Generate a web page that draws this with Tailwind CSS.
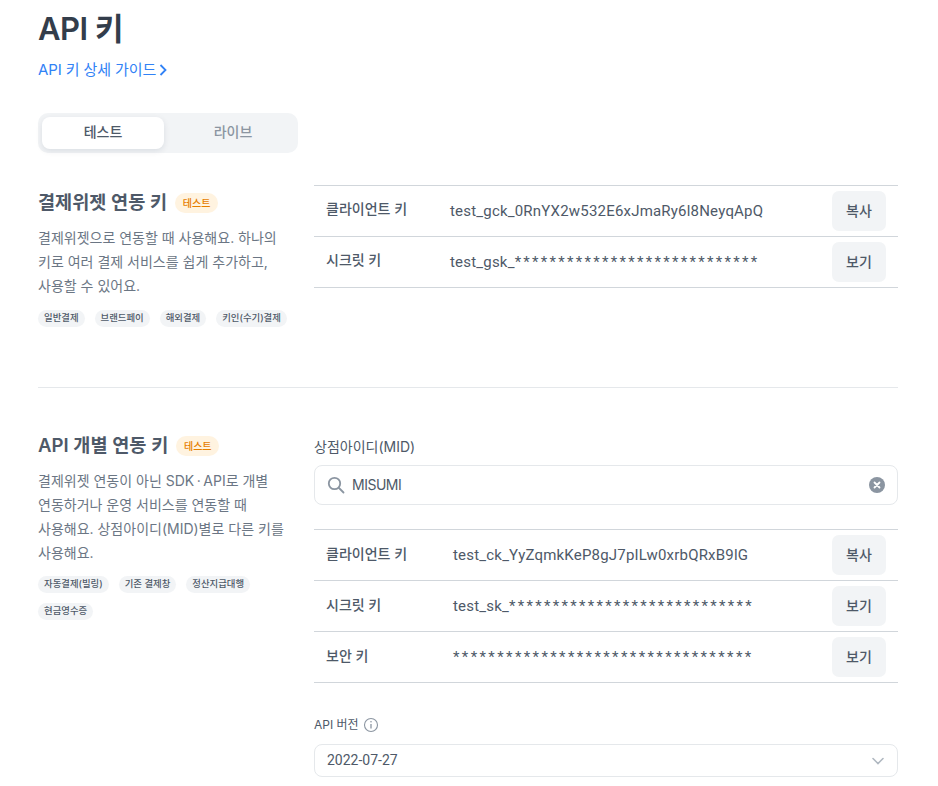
<!DOCTYPE html>
<html lang="ko">
<head>
<meta charset="utf-8">
<script src="https://cdn.jsdelivr.net/npm/@tailwindcss/browser@4"></script>
</head>
<body class="bg-white overflow-hidden">
<div class="w-[938px] h-[786px] overflow-hidden pl-[38px] pr-[40px] font-['Inter','Noto_Sans_CJK_KR',sans-serif] text-[#333d4b]">
  <h1 class="text-[31px] leading-[40px] font-semibold tracking-[-0.5px] pt-[9px] h-[49px]">API 키</h1>
  <a class="mt-[9px] h-[24px] flex items-center gap-[3px] text-[15px] leading-[24px] tracking-[-0.1px] text-[#3182f6]"><span class="pb-[1px]">API 키 상세 가이드</span>
    <svg width="8" height="12" viewBox="0 0 8 12" fill="none" stroke="#3182f6" stroke-width="1.8"><path d="M1.5 1l5 5-5 5"/></svg>
  </a>
  <div class="mt-[31px] w-[260px] h-[40px] bg-[#f2f4f6] rounded-[10px] pl-[4px] py-[4px] flex text-[14px] font-medium">
    <div class="w-[122px] bg-white rounded-[8px] shadow-[0_2px_6px_rgba(0,27,55,0.1)] flex items-center justify-center text-[#4e5968] pb-[4px]">테스트</div>
    <div class="flex-1 flex items-center justify-center text-[#8b95a1] pb-[4px] pl-[4px]">라이브</div>
  </div>

  <section class="mt-[32px] flex gap-[16px] h-[203px] border-b border-[#e5e8eb]">
    <div class="w-[260px]">
      <div class="flex items-center gap-[8px] h-[20px] mt-[8px]">
        <h2 class="text-[18.6px] leading-[20px] font-semibold text-[#4e5968] whitespace-nowrap pb-[3px]">결제위젯 연동 키</h2>
        <span class="h-[20px] w-[43px] rounded-full bg-[#fff3e0] text-[#e67e00] text-[10px] font-medium flex items-center justify-center">테스트</span>
      </div>
      <p class="mt-[13px] text-[14px] leading-[24px] text-[#6b7684]">결제위젯으로 연동할 때 사용해요. 하나의<br>키로 여러 결제 서비스를 쉽게 추가하고,<br>사용할 수 있어요.</p>
      <div class="mt-[12px] flex flex-wrap gap-x-[10px] gap-y-[10px]">
        <span class="h-[17px] px-[6px] rounded-full bg-[#f2f4f6] text-[9.4px] leading-[16px] font-medium text-[#4e5968]">일반결제</span>
        <span class="h-[17px] px-[6px] rounded-full bg-[#f2f4f6] text-[9.4px] leading-[16px] font-medium text-[#4e5968]">브랜드페이</span>
        <span class="h-[17px] px-[6px] rounded-full bg-[#f2f4f6] text-[9.4px] leading-[16px] font-medium text-[#4e5968]">해외결제</span>
        <span class="h-[17px] px-[6px] rounded-full bg-[#f2f4f6] text-[9.4px] leading-[16px] font-medium text-[#4e5968]">키인(수기)결제</span>
      </div>
    </div>
    <div class="flex-1">
      <div class="border-t border-[#d1d6db]">
        <div class="h-[51px] border-b border-[#d1d6db] flex items-center pl-[12px] pr-[12px]">
          <span class="w-[124px] text-[14px] font-medium text-[#4e5968] pb-[5px]">클라이언트 키</span>
          <span class="flex-1 font-['Roboto'] text-[15px] tracking-[0.2px] text-[#4e5968]">test_gck_0RnYX2w532E6xJmaRy6l8NeyqApQ</span>
          <button class="w-[54px] h-[40px] rounded-[7px] bg-[#f2f4f6] text-[14px] font-medium text-[#4e5968] pb-[2px]">복사</button>
        </div>
        <div class="h-[51px] border-b border-[#d1d6db] flex items-center pl-[12px] pr-[12px]">
          <span class="w-[124px] text-[14px] font-medium text-[#4e5968] pb-[5px]">시크릿 키</span>
          <span class="flex-1 font-['Roboto'] text-[15px] tracking-[0.2px] text-[#4e5968]">test_gsk_<span class="tracking-[2.29px]">****************************</span></span>
          <button class="w-[54px] h-[40px] rounded-[7px] bg-[#f2f4f6] text-[14px] font-medium text-[#4e5968] pb-[2px]">보기</button>
        </div>
      </div>
    </div>
  </section>

  <section class="mt-[46px] flex gap-[16px]">
    <div class="w-[260px]">
      <div class="flex items-center gap-[8px] h-[20px] mt-[2px]">
        <h2 class="text-[18.6px] leading-[20px] font-semibold text-[#4e5968] whitespace-nowrap pb-[2px]">API 개별 연동 키</h2>
        <span class="h-[20px] w-[43px] rounded-full bg-[#fff3e0] text-[#e67e00] text-[10px] font-medium flex items-center justify-center">테스트</span>
      </div>
      <p class="mt-[13px] text-[14px] leading-[24px] text-[#6b7684]">결제위젯 연동이 아닌 SDK<span class="mx-[2.5px]">·</span>API로 개별<br>연동하거나 운영 서비스를 연동할 때<br>사용해요. 상점아이디(MID)별로 다른 키를<br>사용해요.</p>
      <div class="mt-[11px] flex flex-wrap gap-x-[10px] gap-y-[10px]">
        <span class="h-[17px] px-[6px] rounded-full bg-[#f2f4f6] text-[9.4px] leading-[16px] font-medium text-[#4e5968]">자동결제(빌링)</span>
        <span class="h-[17px] px-[6px] rounded-full bg-[#f2f4f6] text-[9.4px] leading-[16px] font-medium text-[#4e5968]">기존 결제창</span>
        <span class="h-[17px] px-[6px] rounded-full bg-[#f2f4f6] text-[9.4px] leading-[16px] font-medium text-[#4e5968]">정산지급대행</span>
        <span class="h-[17px] px-[6px] rounded-full bg-[#f2f4f6] text-[9.4px] leading-[16px] font-medium text-[#4e5968]">현금영수증</span>
      </div>
    </div>
    <div class="flex-1 pt-[3px]">
      <div class="text-[14px] leading-[20px] text-[#4e5968]">상점아이디(MID)</div>
      <div class="mt-[8px] h-[40px] border border-[#e5e8eb] rounded-[8px] flex items-center pl-[12px] pr-[12px] text-[14px] text-[#4e5968]">
        <svg width="18" height="18" viewBox="0 0 18 18" fill="none" stroke="#8b95a1" stroke-width="1.8" stroke-linecap="round"><circle cx="7.5" cy="7.5" r="5.7"/><path d="M12 12l4.5 4.5"/></svg>
        <span class="ml-[7px] flex-1 tracking-[-0.5px] pb-[2px]">MISUMI</span>
        <svg width="16" height="16" viewBox="0 0 16 16" fill="none"><circle cx="8" cy="8" r="8" fill="#8b95a1"/><path d="M5.5 5.5l5 5m0-5l-5 5" stroke="#fff" stroke-width="1.8" stroke-linecap="round"/></svg>
      </div>
      <div class="mt-[24px] border-t border-[#d1d6db]">
        <div class="h-[51px] border-b border-[#d1d6db] flex items-center pl-[12px] pr-[12px]">
          <span class="w-[127px] text-[14px] font-medium text-[#4e5968] pb-[3px]">클라이언트 키</span>
          <span class="flex-1 font-['Roboto'] text-[15px] tracking-[0.2px] text-[#4e5968]">test_ck_YyZqmkKeP8gJ7pILw0xrbQRxB9lG</span>
          <button class="w-[54px] h-[40px] rounded-[7px] bg-[#f2f4f6] text-[14px] font-medium text-[#4e5968] pb-[2px]">복사</button>
        </div>
        <div class="h-[51px] border-b border-[#d1d6db] flex items-center pl-[12px] pr-[12px]">
          <span class="w-[127px] text-[14px] font-medium text-[#4e5968] pb-[3px]">시크릿 키</span>
          <span class="flex-1 font-['Roboto'] text-[15px] tracking-[0.2px] text-[#4e5968]">test_sk_<span class="tracking-[2.29px]">****************************</span></span>
          <button class="w-[54px] h-[40px] rounded-[7px] bg-[#f2f4f6] text-[14px] font-medium text-[#4e5968] pb-[2px]">보기</button>
        </div>
        <div class="h-[51px] border-b border-[#d1d6db] flex items-center pl-[12px] pr-[12px]">
          <span class="w-[127px] text-[14px] font-medium text-[#4e5968] pb-[3px]">보안 키</span>
          <span class="flex-1 font-['Roboto'] text-[15px] tracking-[2.38px] text-[#4e5968]">**********************************</span>
          <button class="w-[54px] h-[40px] rounded-[7px] bg-[#f2f4f6] text-[14px] font-medium text-[#4e5968] pb-[2px]">보기</button>
        </div>
      </div>
      <div class="mt-[32px] flex items-center gap-[4px] text-[12px] leading-[20px] text-[#4e5968]">API 버전
        <svg width="16" height="16" viewBox="0 0 16 16" fill="none" stroke="#8b95a1" stroke-width="1.1"><circle cx="8" cy="8" r="6.5"/><path d="M8 7v4.5" stroke-width="1.3"/><circle cx="8" cy="4.8" r="0.8" fill="#8b95a1" stroke="none"/></svg>
      </div>
      <div class="mt-[9px] h-[33px] border border-[#e5e8eb] rounded-[8px] flex items-center justify-between pl-[12px] pr-[12px] text-[14px] font-['Roboto'] text-[#4e5968]">2022-07-27
        <svg width="14" height="8" viewBox="0 0 14 8" fill="none" stroke="#b0b8c1" stroke-width="1.6" stroke-linecap="round"><path d="M2 1.5l5 5 5-5"/></svg>
      </div>
    </div>
  </section>
</div>
</body>
</html>
